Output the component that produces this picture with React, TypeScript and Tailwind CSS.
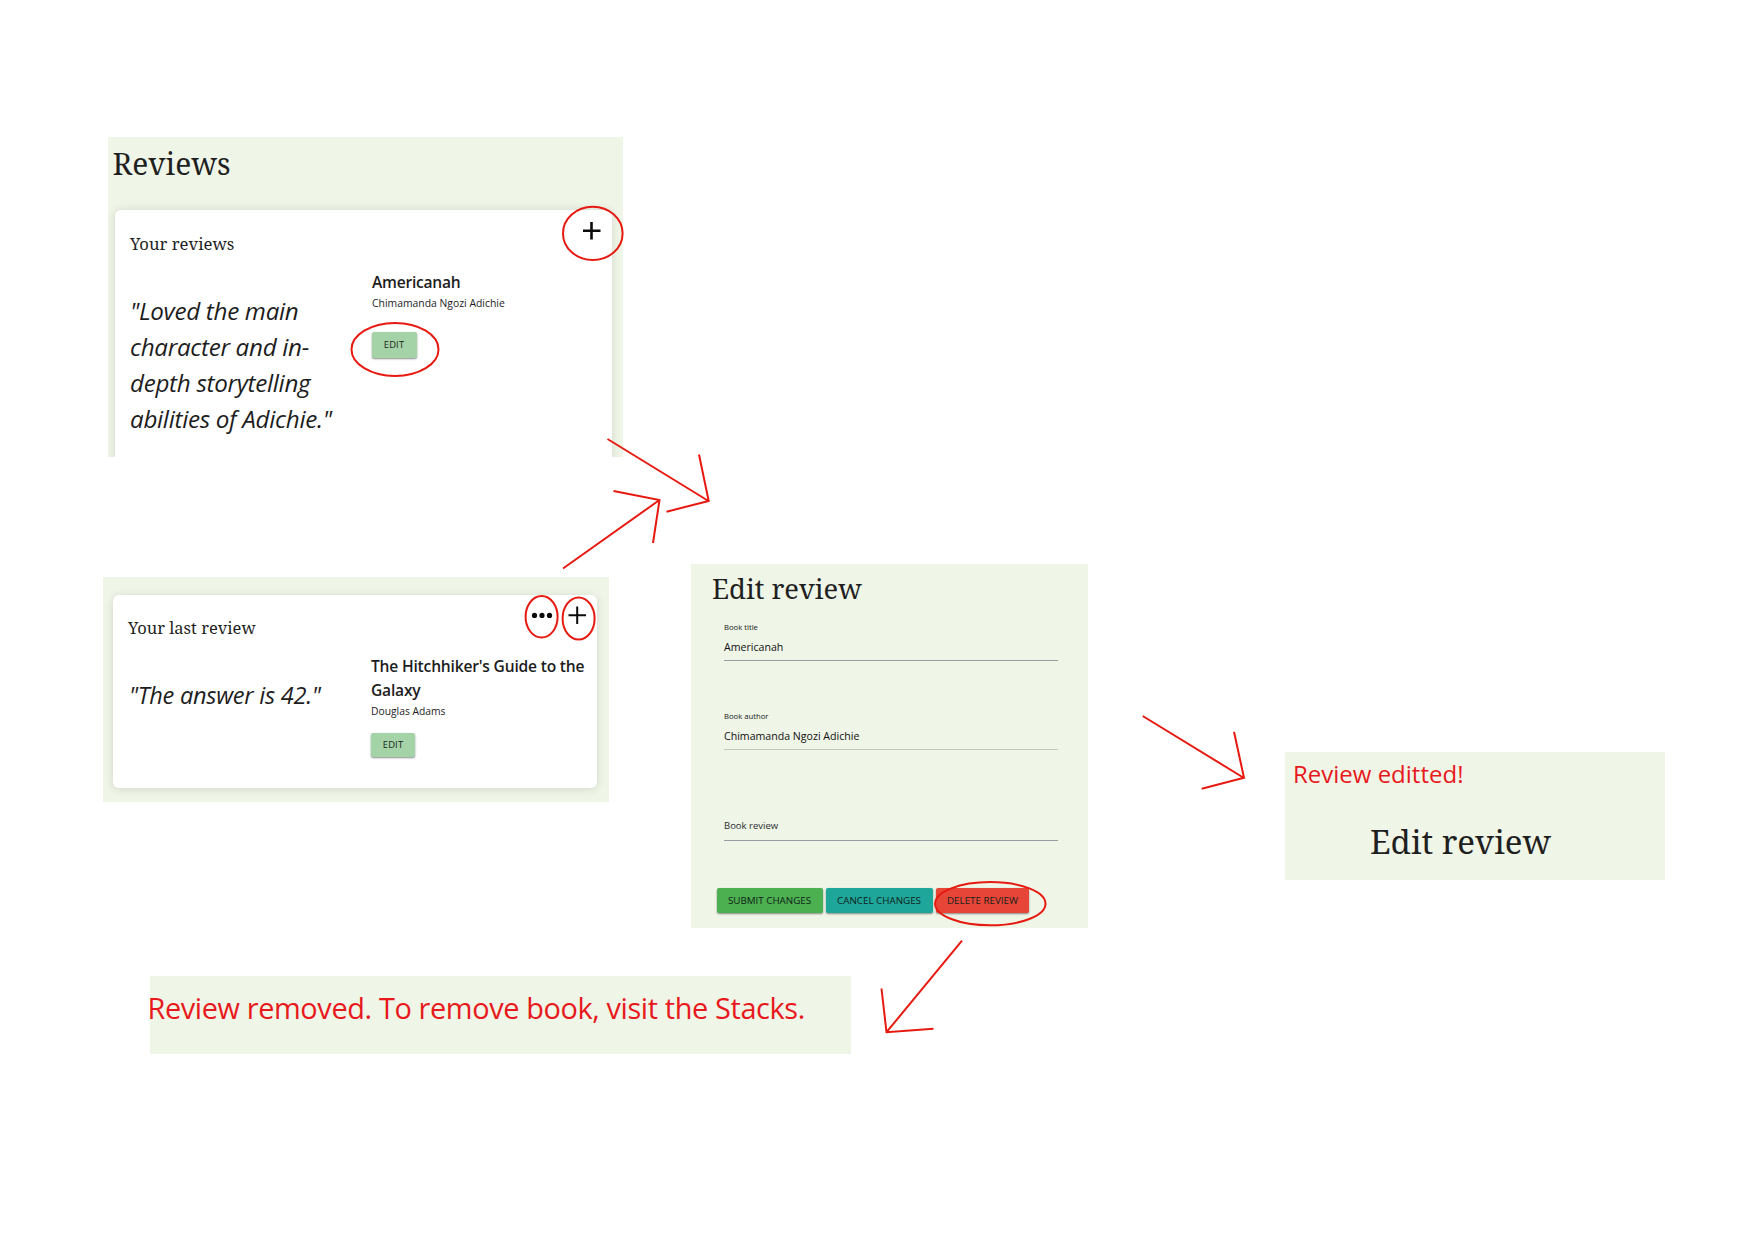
import type { ReactNode } from "react";

const serif = "font-['Noto_Serif',serif] text-[#1f1f1f]";

/** Screen fragment placed on the free canvas. */
function Panel({ place, children }: { place: string; children: ReactNode }) {
  return <section className={`absolute bg-[#eff5e7] ${place}`}>{children}</section>;
}

function EditButton({ className }: { className: string }) {
  return (
    <button
      className={`flex items-center justify-center rounded-[2px] bg-[#a5d3a8] text-[9.4px] tracking-[0.15px] text-[#1a241b] shadow-[0_1px_2px_rgba(0,0,0,0.45)] ${className}`}
    >
      EDIT
    </button>
  );
}

function Field({ label, value, className }: { label: string; value: string; className: string }) {
  return (
    <div className={`ml-[33px] flex h-10 w-[334px] flex-col border-b ${className}`}>
      <label className="text-[7.7px] leading-[12px] text-[#16181a]">{label}</label>
      <span className="mt-[5.5px] text-[10.6px] leading-[16px] text-[#111]">{value}</span>
    </div>
  );
}

function ReviewsPanel() {
  return (
    <Panel place="left-[108px] top-[137px] h-[320px] w-[515px] overflow-hidden pl-[7px] pt-[7px]">
      <h1 className={`-ml-[2.5px] text-[30px] leading-[40px] ${serif}`}>Reviews</h1>
      <div className="mt-[26px] h-[260px] w-[497px] rounded-md bg-white px-[15px] pt-[22px] shadow-[0_0_10px_rgba(0,0,0,0.12)]">
        <h2 className={`text-[16.7px] leading-[24px] ${serif}`}>Your reviews</h2>
        <div className="flex">
          <p className="mt-[37px] w-[242px] text-[24.2px] italic leading-[35.9px] tracking-[-0.3px]">
            "Loved the main
            <br />
            character and in-
            <br />
            depth storytelling
            <br />
            abilities of Adichie."
          </p>
          <div className="mt-[14px]">
            <h3 className="text-[15.6px] font-semibold leading-[24px] tracking-[-0.25px]">Americanah</h3>
            <p className="mt-px text-[10.4px] leading-[16px]">Chimamanda Ngozi Adichie</p>
            <EditButton className="mt-[21px] h-[26px] w-[45px] pr-px" />
          </div>
        </div>
      </div>
    </Panel>
  );
}

function LastReviewPanel() {
  return (
    <Panel place="left-[103px] top-[577px] h-[225px] w-[506px] overflow-hidden pl-[10px] pt-[18px]">
      <div className="h-[193px] w-[484px] rounded-md bg-white pl-[16px] pt-[21px] shadow-[0_1px_9px_rgba(0,0,0,0.13)]">
        <h2 className={`-ml-px text-[16.5px] leading-[24px] ${serif}`}>Your last review</h2>
        <div className="flex">
          <p className="mt-[37px] w-[242px] text-[23.6px] italic leading-[36px] tracking-[-0.27px]">
            "The answer is 42."
          </p>
          <div className="mt-[14px]">
            <h3 className="text-[15.6px] font-semibold leading-[24px] tracking-[-0.2px]">
              The Hitchhiker's Guide to the
              <br />
              Galaxy
            </h3>
            <p className="mt-px text-[10.3px] leading-[16px]">Douglas Adams</p>
            <EditButton className="mt-[14px] h-6 w-11" />
          </div>
        </div>
      </div>
    </Panel>
  );
}

function EditReviewPanel() {
  const button =
    "flex items-center justify-center rounded-[2px] text-[9.8px] text-[#10221a] shadow-[0_1px_2px_rgba(0,0,0,0.45)] h-[25px] whitespace-nowrap";
  return (
    <Panel place="left-[691px] top-[564px] h-[363.5px] w-[396.5px] pt-[7px]">
      <h1 className={`ml-[21px] text-[27.4px] leading-[36px] ${serif}`}>Edit review</h1>
      <Field label="Book title" value="Americanah" className="mt-[14px] border-[#989ea3]" />
      <Field label="Book author" value="Chimamanda Ngozi Adichie" className="mt-[49px] border-[#c3c9bd]" />
      <div className="ml-[33px] mt-[67px] h-[24px] w-[334px] border-b border-[#989ea3] text-[9.5px] leading-[17px] text-[#2b2d30]">
        Book review
      </div>
      <div className="ml-[26px] mt-[47px] flex gap-[3px]">
        <button className={`w-[106px] bg-[#4caf50] pr-px pt-[2px] ${button}`}>SUBMIT CHANGES</button>
        <button className={`w-[107px] bg-[#1fa69a] pr-px pt-px ${button}`}>CANCEL CHANGES</button>
        <button className={`w-[93px] bg-[#e84539] pt-px ${button}`}>DELETE REVIEW</button>
      </div>
    </Panel>
  );
}

/** Icons and the hand-drawn red marks that connect the screens. */
function Annotations() {
  return (
    <svg className="pointer-events-none absolute inset-0" width="1739" height="1234" fill="none">
      <g stroke="#0b0b0b">
        <path d="M583 230.7h17.5M591.5 222v17.5" strokeWidth="2.6" />
        <path d="M568.5 615.2h17.5M577.2 606.5v17.5" strokeWidth="2" />
      </g>
      <g fill="#0b0b0b">
        <circle cx="534.5" cy="615.4" r="2.6" />
        <circle cx="542" cy="615.4" r="2.6" />
        <circle cx="549.5" cy="615.4" r="2.6" />
      </g>
      <g stroke="#e61a10" strokeWidth="2">
        <ellipse cx="592.8" cy="233.4" rx="29.8" ry="26.6" />
        <ellipse cx="395" cy="349.4" rx="43.5" ry="26.5" />
        <ellipse cx="541.6" cy="616.8" rx="16" ry="20.8" />
        <ellipse cx="578.6" cy="618.5" rx="16" ry="21" />
        <ellipse cx="990.3" cy="903.7" rx="55.2" ry="21.6" />
        <path d="M607.5 439l101 62M699 454.5l9.7 46.5-42.2 10.7" />
        <path d="M563 568.5l96.5-68.5M613.5 491l46 9-6.5 43" />
        <path d="M1142.7 716l101.3 62M1234 731.7l10 46.1-42.3 11" />
        <path d="M962 940.7l-75.5 91.5M881.5 988.5l5 43.7 47-3.5" />
      </g>
    </svg>
  );
}

export default function App() {
  return (
    <main className="relative h-[1234px] w-[1739px] overflow-hidden bg-white font-['Open_Sans',sans-serif] text-[#1d1d1d]">
      <ReviewsPanel />
      <LastReviewPanel />
      <EditReviewPanel />
      <Panel place="left-[1285px] top-[752px] h-[127.5px] w-[380px] pt-[6px]">
        <p className="ml-[8px] text-[24px] leading-[32px] text-[#e8191c]">Review editted!</p>
        <h1 className={`ml-[85px] mt-[28px] text-[33.1px] leading-[48px] ${serif}`}>Edit review</h1>
      </Panel>
      <Panel place="left-[150px] top-[976px] h-[78px] w-[701px] pt-[12px]">
        <p className="-ml-[2.5px] whitespace-nowrap text-[28.9px] leading-[40px] tracking-[-0.38px] text-[#e8191c]">
          Review removed. To remove book, visit the Stacks.
        </p>
      </Panel>
      <Annotations />
    </main>
  );
}
